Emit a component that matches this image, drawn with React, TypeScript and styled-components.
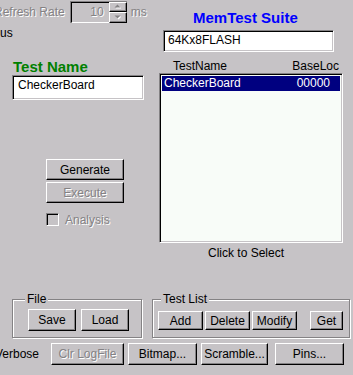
import React from "react";
import styled, { createGlobalStyle, css } from "styled-components";

const GlobalStyle = createGlobalStyle`
  html, body { margin: 0; padding: 0; background: #c6c3c6; }
  body {
    font-family: "Liberation Sans", Arial, sans-serif;
    font-size: 12px;
    color: #000;
  }
`;

const disabledText = css`
  color: #848284;
  text-shadow: 1px 1px 0 #ffffff;
`;

const sunken = css`
  box-sizing: border-box;
  border: 1px solid;
  border-color: #848284 #ffffff #ffffff #848284;
  box-shadow: inset 1px 1px 0 #000000, inset -1px -1px 0 #c6c3c6;
`;

const Root = styled.div`
  width: 353px;
  height: 375px;
  overflow: hidden;
  display: flex;
  flex-direction: column;
  background: #c6c3c6;
`;

const Top = styled.div`
  display: grid;
  grid-template-columns: 159px 184px;
  align-items: start;
`;

const LeftCol = styled.div`
  display: flex;
  flex-direction: column;
  align-items: flex-start;
`;

const RightCol = styled.div`
  display: flex;
  flex-direction: column;
  align-items: flex-start;
`;

const RefreshRow = styled.div`
  display: flex;
  align-items: center;
  height: 23px;
  margin-left: -6px;
  white-space: nowrap;
`;

const DisabledLabel = styled.span`
  ${disabledText};
  line-height: 14px;
`;

const Spin = styled.div`
  display: flex;
  height: 22px;
  margin-left: 5px;
  box-sizing: border-box;
  border-top: 1px solid #848284;
  border-left: 1px solid #848284;
`;

const SpinEdit = styled.div`
  width: 38px;
  box-sizing: border-box;
  border-top: 1px solid #000;
  border-left: 1px solid #000;
  border-bottom: 1px solid #fff;
  text-align: right;
  padding-right: 5px;
  line-height: 19px;
  ${disabledText};
`;

const SpinButtons = styled.div`
  display: flex;
  flex-direction: column;
  width: 18px;
`;

const SpinBtn = styled.div`
  flex: 1;
  box-sizing: border-box;
  border: 1px solid;
  border-color: #ffffff #000000 #000000 #ffffff;
  box-shadow: inset -1px -1px 0 #848284;
  display: flex;
  align-items: center;
  justify-content: center;
`;

const Unit = styled.span`
  ${disabledText};
  margin-left: 4px;
`;

const Status = styled.div`
  margin-top: 3px;
  line-height: 14px;
`;

const GreenTitle = styled.div`
  margin: 18px 0 0 13px;
  font-size: 15px;
  font-weight: bold;
  line-height: 17px;
  color: #008000;
`;

const TextBox = styled.div<{ $w: number; $h: number; $pt: number; $pl: number }>`
  ${sunken};
  width: ${(p) => p.$w}px;
  height: ${(p) => p.$h}px;
  background: #ffffff;
  padding: ${(p) => p.$pt}px 0 0 ${(p) => p.$pl}px;
  line-height: 14px;
  white-space: nowrap;
`;

const Button = styled.div<{ $w: number; $h?: number; $disabled?: boolean }>`
  box-sizing: border-box;
  width: ${(p) => p.$w}px;
  height: ${(p) => p.$h ?? 22}px;
  border: 1px solid;
  border-color: #ffffff #000000 #000000 #ffffff;
  box-shadow: inset -1px -1px 0 #848284;
  background: #c6c3c6;
  display: flex;
  align-items: center;
  justify-content: center;
  line-height: 14px;
  white-space: nowrap;
  ${(p) => p.$disabled && disabledText};
`;

const ActionStack = styled.div`
  display: flex;
  flex-direction: column;
  gap: 2px;
  margin: 59px 0 0 46px;
`;

const CheckRow = styled.div`
  display: flex;
  align-items: center;
  gap: 6px;
  margin: 10px 0 0 46px;
  height: 13px;
`;

const CheckBox = styled.div`
  ${sunken};
  width: 13px;
  height: 13px;
  background: #c6c3c6;
`;

const BlueTitle = styled.div`
  margin: 9px 0 0 34px;
  font-size: 15px;
  font-weight: bold;
  line-height: 18px;
  color: #0000ff;
`;

const SuiteBox = styled(TextBox)`
  margin: 3px 0 0 4px;
`;

const NameBox = styled(TextBox)`
  margin-left: 12px;
`;

const ListHeader = styled.div`
  margin-top: 7px;
  width: 184px;
  box-sizing: border-box;
  display: flex;
  justify-content: space-between;
  padding: 0 4px 0 14px;
  line-height: 14px;
`;

const ListBox = styled.div`
  ${sunken};
  width: 184px;
  height: 170px;
  background: #f8fcf8;
  padding: 2px;
`;

const ListRow = styled.div<{ $selected?: boolean }>`
  display: flex;
  justify-content: space-between;
  height: 15px;
  line-height: 15px;
  padding: 0 10px 0 2px;
  background: ${(p) => (p.$selected ? "#000080" : "transparent")};
  color: ${(p) => (p.$selected ? "#ffffff" : "#000000")};
`;

const Hint = styled.div`
  margin: 3px 0 0 49px;
  line-height: 14px;
`;

const Groups = styled.div`
  display: flex;
  gap: 10px;
  margin: 39px 0 0 12px;
`;

const GroupBox = styled.div<{ $w: number; $pt: number; $pl: number }>`
  position: relative;
  box-sizing: border-box;
  width: ${(p) => p.$w}px;
  height: 39px;
  border: 1px solid #848284;
  box-shadow: 1px 1px 0 #ffffff, inset 1px 1px 0 #ffffff;
  padding: ${(p) => p.$pt}px 0 0 ${(p) => p.$pl}px;
  display: flex;
  align-items: flex-start;
`;

const Legend = styled.span<{ $left: number }>`
  position: absolute;
  top: -8px;
  left: ${(p) => p.$left}px;
  padding: 0 2px;
  background: #c6c3c6;
  line-height: 14px;
`;

const ButtonGroup = styled.div<{ $gap: number }>`
  display: flex;
  gap: ${(p) => p.$gap}px;
`;

const GetButton = styled(Button)`
  margin-left: 13px;
`;

const BottomRow = styled.div`
  display: flex;
  align-items: center;
  margin-top: 5px;
  height: 22px;
`;

const VerboseLabel = styled.span`
  width: 45px;
  margin-left: -5px;
  margin-right: 11px;
  line-height: 14px;
  white-space: nowrap;
`;

const BottomButtons = styled.div`
  display: flex;
  align-items: center;
`;

const Gap = styled.div<{ $w: number }>`
  width: ${(p) => p.$w}px;
`;

const Arrow = ({ up }: { up?: boolean }) => (
  <svg width="7" height="5" viewBox="0 0 7 5">
    {up ? (
      <>
        <polygon points="1.5,4.5 4.5,1.5 7.5,4.5" fill="#ffffff" />
        <polygon points="0.5,3.5 3.5,0.5 6.5,3.5" fill="#848284" />
      </>
    ) : (
      <>
        <polygon points="1.5,1.5 7.5,1.5 4.5,4.5" fill="#ffffff" />
        <polygon points="0.5,0.5 6.5,0.5 3.5,3.5" fill="#848284" />
      </>
    )}
  </svg>
);

export default function App() {
  return (
    <>
      <GlobalStyle />
      <Root>
        <Top>
          <LeftCol>
            <RefreshRow>
              <DisabledLabel>Refresh Rate</DisabledLabel>
              <Spin>
                <SpinEdit>10</SpinEdit>
                <SpinButtons>
                  <SpinBtn>
                    <Arrow up />
                  </SpinBtn>
                  <SpinBtn>
                    <Arrow />
                  </SpinBtn>
                </SpinButtons>
              </Spin>
              <Unit>ms</Unit>
            </RefreshRow>
            <Status>us</Status>
            <GreenTitle>Test Name</GreenTitle>
            <NameBox $w={132} $h={25} $pt={2} $pl={5}>
              CheckerBoard
            </NameBox>
            <ActionStack>
              <Button $w={78} $h={21}>Generate</Button>
              <Button $w={78} $h={21} $disabled>
                Execute
              </Button>
            </ActionStack>
            <CheckRow>
              <CheckBox />
              <DisabledLabel>Analysis</DisabledLabel>
            </CheckRow>
          </LeftCol>
          <RightCol>
            <BlueTitle>MemTest Suite</BlueTitle>
            <SuiteBox $w={171} $h={22} $pt={2} $pl={4}>
              64Kx8FLASH
            </SuiteBox>
            <ListHeader>
              <span>TestName</span>
              <span>BaseLoc</span>
            </ListHeader>
            <ListBox>
              <ListRow $selected>
                <span>CheckerBoard</span>
                <span>00000</span>
              </ListRow>
            </ListBox>
            <Hint>Click to Select</Hint>
          </RightCol>
        </Top>
        <Groups>
          <GroupBox $w={130} $pt={9} $pl={15}>
            <Legend $left={12}>File</Legend>
            <ButtonGroup $gap={5}>
              <Button $w={48} $h={22}>Save</Button>
              <Button $w={48} $h={22}>Load</Button>
            </ButtonGroup>
          </GroupBox>
          <GroupBox $w={198} $pt={11} $pl={5}>
            <Legend $left={8}>Test List</Legend>
            <ButtonGroup $gap={2}>
              <Button $w={45} $h={19}>Add</Button>
              <Button $w={45} $h={19}>Delete</Button>
              <Button $w={45} $h={19}>Modify</Button>
            </ButtonGroup>
            <GetButton $w={33} $h={19}>Get</GetButton>
          </GroupBox>
        </Groups>
        <BottomRow>
          <VerboseLabel>Verbose</VerboseLabel>
          <BottomButtons>
            <Button $w={73} $disabled>
              Clr LogFile
            </Button>
            <Gap $w={4} />
            <Button $w={69}>Bitmap...</Button>
            <Gap $w={4} />
            <Button $w={67}>Scramble...</Button>
            <Gap $w={7} />
            <Button $w={69}>Pins...</Button>
          </BottomButtons>
        </BottomRow>
      </Root>
    </>
  );
}
